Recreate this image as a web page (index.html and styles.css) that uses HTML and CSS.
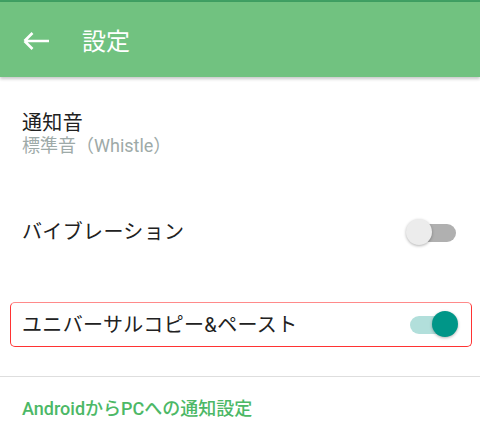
FILE: index.html
```html
<!DOCTYPE html>
<html lang="ja">

<head>
    <meta charset="UTF-8">
    <meta name="viewport" content="width=device-width, initial-scale=1.0">
    <title>設定</title>
    <link rel="stylesheet" href="styles.css">
</head>

<body>
    <div class="status-strip"></div>
    <header class="toolbar">
        <svg class="back" width="27" height="18" viewBox="0 0 27 18">
            <path d="M1.5 9H26M1.5 9L9.5 1M1.5 9L9.5 17" fill="none" stroke="#fff" stroke-width="2.6" />
        </svg>
        <h1 class="title">設定</h1>
    </header>

    <div class="pref pref-sound">
        <div class="pref-title">通知音</div>
        <div class="pref-summary">標準音（Whistle）</div>
    </div>

    <div class="pref pref-row">
        <span class="pref-title">バイブレーション</span>
        <span class="switch">
            <span class="track"></span>
            <span class="thumb"></span>
        </span>
    </div>

    <div class="pref pref-row pref-selected">
        <span class="pref-title">ユニバーサルコピー&amp;ペースト</span>
        <span class="switch on">
            <span class="track"></span>
            <span class="thumb"></span>
        </span>
    </div>

    <div class="divider"></div>

    <div class="category">AndroidからPCへの通知設定</div>
</body>

</html>
```

FILE: styles.css
```css
body {
    margin: 0;
    background: #fff;
    font-family: Roboto, "Noto Sans CJK JP", sans-serif;
    color: #212121;
}

.status-strip {
    height: 2px;
    background-color: #3f9f63;
}

.toolbar {
    height: 75px;
    background-color: #71c280;
    display: flex;
    align-items: center;
    padding-left: 23px;
    box-shadow: 0 2px 3px rgba(0, 0, 0, 0.22);
    position: relative;
}

.back {
    display: block;
    margin-top: 2px;
}

.title {
    margin: 0 0 0 32px;
    font-size: 24px;
    font-weight: 400;
    color: #fff;
}

.pref {
    padding: 0 22px;
}

.pref-sound {
    padding-top: 34px;
    height: 89px;
}

.pref-title {
    font-size: 20px;
    line-height: 24px;
    letter-spacing: 0.35px;
}

.pref-summary {
    font-size: 18px;
    line-height: 22px;
    color: #9eaaa8;
}

.pref-row {
    display: flex;
    align-items: center;
    justify-content: space-between;
    height: 64px;
    padding-right: 22px;
}

.pref-selected {
    box-sizing: border-box;
    height: 45px;
    margin: 38px 8px 0 10px;
    padding: 0 13px 0 11px;
    border: 1px solid #f33;
    border-top-color: #ff8a8a;
    border-radius: 5px;
}

.switch {
    position: relative;
    width: 52px;
    height: 27px;
    flex-shrink: 0;
}

.track {
    position: absolute;
    left: 4px;
    right: 2px;
    top: 5px;
    height: 18px;
    border-radius: 9px;
    background-color: #b0b0b0;
}

.thumb {
    position: absolute;
    left: 0;
    top: 0;
    width: 26px;
    height: 26px;
    border-radius: 50%;
    background-color: #ececec;
    box-shadow: 0 1px 3px rgba(0, 0, 0, 0.3);
}

.switch.on .track {
    background-color: #b2dfdb;
}

.switch.on .thumb {
    left: auto;
    right: 0;
    background-color: #009688;
}

.divider {
    margin-top: 29px;
    height: 1px;
    background-color: #dedede;
}

.category {
    padding: 21px 22px 0;
    font-size: 18px;
    line-height: 22px;
    font-weight: 500;
    color: #4cb866;
}
```
